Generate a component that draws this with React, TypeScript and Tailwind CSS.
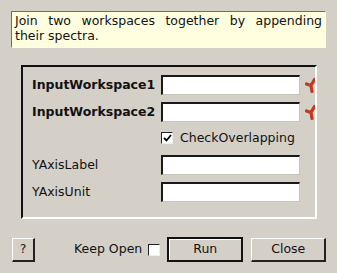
import React from 'react';

const font = { fontFamily: '"DejaVu Sans", sans-serif' };

// Sunken white line-edit, old Qt/Win style
const LineEdit = () => (
    <div className="shrink-0 w-[139px] h-[20px] bg-white border-t-2 border-l-2 border-t-[#1a1a1a] border-l-[#1a1a1a] border-b border-r border-b-[#c8c4bc] border-r-[#c8c4bc]" />
);

const RequiredMark = () => (
    <svg width="12" height="16" viewBox="0 0 12 16" className="block">
        <path d="M6 8.5 L9.5 2.5 M6 8.5 L1.5 7 M6 8.5 L7 14.5" stroke="#c23a22" strokeWidth="3.2" strokeLinecap="round" strokeLinejoin="round" fill="none" />
    </svg>
);

const Row = ({ label, bold = false, required = false }: { label: string; bold?: boolean; required?: boolean }) => (
    <div className="flex items-center h-[20px]">
        <span className={`shrink-0 w-[129px] whitespace-nowrap text-[12.5px] text-[#111] ${bold ? 'font-bold' : ''}`}>{label}</span>
        <LineEdit />
        {required && (
            <span className="shrink-0 ml-[5px]">
                <RequiredMark />
            </span>
        )}
    </div>
);

const Checkbox = ({ checked = false }: { checked?: boolean }) => (
    <span className="shrink-0 flex items-center justify-center w-[12px] h-[12px] bg-white border-t border-l border-t-[#222] border-l-[#222] border-b border-r border-b-[#eee] border-r-[#eee]">
        {checked && (
            <svg width="9" height="8" viewBox="0 0 9 8">
                <path d="M1 4 L3.5 6.5 L8 1" stroke="#000" strokeWidth="1.8" fill="none" />
            </svg>
        )}
    </span>
);

export default function App() {
    return (
        <div className="w-[337px] h-[273px] bg-[#d4d0c8] pt-[11px] px-[11px] overflow-hidden" style={font}>
            {/* Description */}
            <div className="w-[315px] h-[37px] bg-[#ffffe0] border-t border-l border-t-[#6e6e6e] border-l-[#6e6e6e] border-b border-r border-b-white border-r-white px-[3px] pt-[1px]">
                <p className="text-[12.5px] leading-[15px] text-[#111]">
                    <span className="block text-justify [text-align-last:justify]">Join two workspaces together by appending</span>
                    <span className="block">their spectra.</span>
                </p>
            </div>

            {/* Properties group */}
            <div className="ml-[10px] mt-[17px] w-[296px] h-[154px] border-t-2 border-l-2 border-t-[#111] border-l-[#111] border-b-2 border-r-2 border-b-white border-r-white pl-[9px] pt-[8px] overflow-hidden">
                <Row label="InputWorkspace1" bold required />
                <div className="mt-[7px]">
                    <Row label="InputWorkspace2" bold required />
                </div>
                <div className="flex items-center mt-[10px] h-[12px] pl-[129px]">
                    <Checkbox checked />
                    <span className="ml-[7px] whitespace-nowrap text-[12.5px] text-[#111]">CheckOverlapping</span>
                </div>
                <div className="mt-[11px]">
                    <Row label="YAxisLabel" />
                </div>
                <div className="mt-[7px]">
                    <Row label="YAxisUnit" />
                </div>
            </div>

            {/* Buttons */}
            <div className="flex items-center mt-[18px] ml-[1px]">
                <button className="shrink-0 w-[23px] h-[24px] text-[12.5px] text-[#222] bg-[#d4d0c8] border-t border-l border-t-white border-l-white border-b-2 border-r-2 border-b-[#222] border-r-[#222]">
                    ?
                </button>
                <span className="shrink-0 ml-[39px] whitespace-nowrap text-[12.5px] text-[#111]">Keep Open</span>
                <span className="shrink-0 ml-[6px]">
                    <Checkbox />
                </span>
                <button className="shrink-0 ml-[7px] w-[76px] h-[25px] text-[12.5px] text-[#111] bg-[#d4d0c8] border-2 border-[#111] shadow-[inset_1px_1px_0_white]">
                    Run
                </button>
                <button className="shrink-0 ml-[8px] w-[75px] h-[24px] text-[12.5px] text-[#111] bg-[#d4d0c8] border-t border-l border-t-white border-l-white border-b-2 border-r-2 border-b-[#222] border-r-[#222]">
                    Close
                </button>
            </div>
        </div>
    );
}
